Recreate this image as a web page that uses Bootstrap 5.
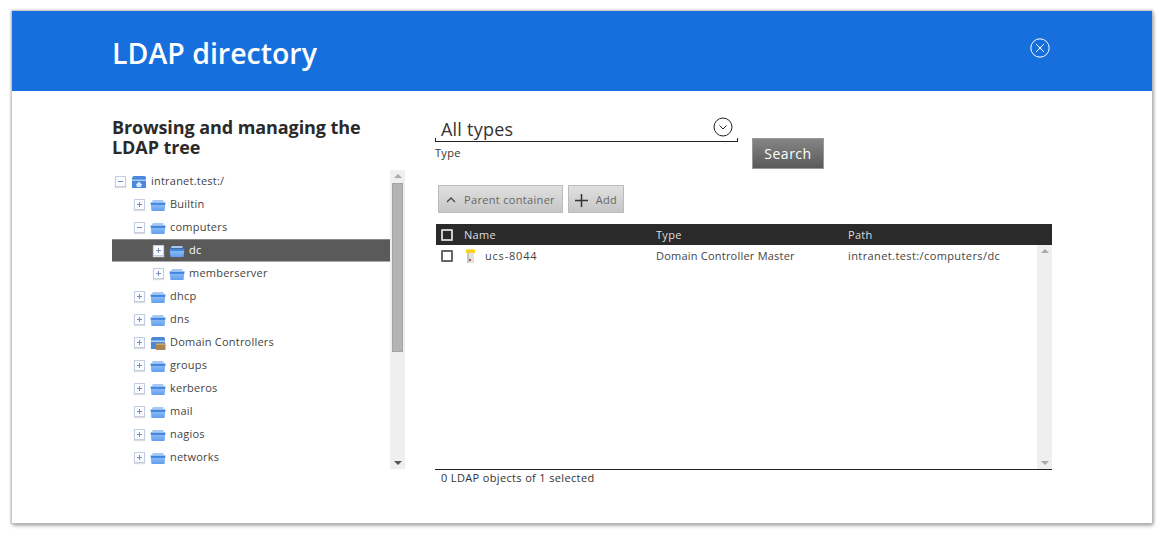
<!DOCTYPE html>
<html lang="en">
<head>
    <meta charset="UTF-8">
    <meta name="viewport" content="width=device-width, initial-scale=1.0">
    <title>LDAP directory</title>
    <link href="https://cdn.jsdelivr.net/npm/bootstrap@5.3.0/dist/css/bootstrap.min.css" rel="stylesheet">
    <style>
        html, body { height: 100%; }
        body { background: #fff; font-family: "Open Sans", "Noto Sans", sans-serif; color: #333; padding: 11px 0 0 12px; }
        .dlg { width: 1140px; height: 512px; box-shadow: 0 0 2px 1px #bbb, 1px 2px 4px #888; background: #fff; }
        .dlg-head { height: 80px; background: #166fdd; padding: 0 102px 0 100px; }
        .dlg-title { font-size: 28.5px; line-height: 34px; font-weight: 600; color: #fff; margin: 0; padding-top: 25px; }
        .dlg-body { padding: 25px 100px 0 100px; gap: 30px; }
        .tree-col { width: 293px; }
        .tree-title { font-size: 18px; line-height: 20px; font-weight: 700; color: #2a2a2a; margin: 1px 0 13px; letter-spacing: -.08px; }
        .tree-wrap { height: 299px; }
        .tree-rows { width: 278px; }
        .tree-row { height: 23px; font-size: 11px; letter-spacing: .22px; color: #444; gap: 5px; padding-left: 3px; }
        .tree-row.lvl1 { padding-left: 22px; }
        .tree-row.lvl2 { padding-left: 41px; }
        .tree-row.sel { background: #5a5a5a; color: #fff; border-top: 1px solid #888; border-bottom: 1px solid #aaa; }
        .exp { width: 11px; height: 11px; flex: none; border: 1px solid #c3cee4; background: #fbfcff; box-shadow: 0 1px 1px #ddd; position: relative; }
        .exp::before { content: ""; position: absolute; left: 2px; top: 4px; width: 5px; height: 1px; background: #7a8db3; }
        .exp.plus::after { content: ""; position: absolute; left: 4px; top: 2px; width: 1px; height: 5px; background: #7a8db3; }
        .fold { width: 16px; height: 16px; flex: none; margin-right: -1px; }
        .vbar { width: 15px; background: #efefef; flex: none; position: relative; }
        .vbar-thumb { position: absolute; left: 2px; top: 13px; width: 11px; height: 169px; background: #b4b4b4; border: 1px solid #a4a4a4; }
        .arr-up, .arr-dn { position: absolute; left: 4px; width: 0; height: 0; border-left: 4px solid transparent; border-right: 4px solid transparent; }
        .arr-up { top: 4px; border-bottom: 4px solid #aaa; }
        .arr-dn { bottom: 4px; border-top: 4px solid #555; }
        .grid-body .arr-dn { border-top-color: #aaa; }
        .list-col { width: 617px; }
        .type-field { width: 303px; }
        .type-box { height: 26px; border-bottom: 1px solid #222; position: relative; padding-left: 6px; font-size: 18px; line-height: 26px; color: #333; letter-spacing: .22px; }
        .type-box::before, .type-box::after { content: ""; position: absolute; bottom: 0; width: 1px; height: 3px; background: #222; }
        .type-box::before { left: 0; }
        .type-box::after { right: 0; }
        .type-icon { position: absolute; right: 5px; top: 1px; }
        .type-label { font-size: 11px; line-height: 14px; margin-top: 4px; letter-spacing: .3px; color: #333; }
        .btn-search { width: 72px; height: 31px; margin: 22px 0 0 14px; padding: 0; font-size: 14px; letter-spacing: .5px; color: #fff; border: 1px solid #999; border-radius: 0; background: linear-gradient(#858585, #5a5a5a); }
        .btn-search:hover { color: #fff; }
        .bar-btns { margin: 16px 0 11px 3px; gap: 5px; }
        .btn-soft { height: 28px; padding: 2px 0 0; border: 1px solid #bbb; border-radius: 0; background: linear-gradient(#e0e0e0, #c6c6c6); color: #666; font-size: 11px; letter-spacing: .32px; gap: 8px; }
        .btn-parent { width: 125px; }
        .btn-add { width: 56px; }
        .grid-head { height: 21px; margin-left: 1px; padding-top: 1px; background: #2a2a2a; color: #ddd; font-size: 11px; letter-spacing: .3px; }
        .grid-row { height: 21px; padding-top: 1px; font-size: 11px; letter-spacing: .22px; color: #444; }
        .c-check { width: 28px; padding-left: 5px; flex: none; }
        .c-name { width: 192px; flex: none; }
        .c-type { width: 192px; flex: none; }
        .c-host { letter-spacing: .8px; }
        .c-path { letter-spacing: .4px; }
        .chk { display: block; width: 12px; height: 12px; border: 2px solid #666; border-radius: 1px; background: #fff; }
        .grid-head .chk { border-color: #ccc; background: #2a2a2a; }
        .grid-body { height: 224px; margin-left: 1px; }
        .grid-list { width: 601px; }
        .grid-foot { border-top: 1px solid #222; font-size: 11px; line-height: 16px; padding: 0 0 0 6px; letter-spacing: .35px; color: #333; }
        .close-x { margin-top: 27px; }
    </style>
</head>
<body>

    <svg width="0" height="0" class="d-block">
        <defs>
            <linearGradient id="fb" x1="0" y1="0" x2="0" y2="1">
                <stop offset="0" stop-color="#3a7ed8"/>
                <stop offset="0.3" stop-color="#4a8fe8"/>
                <stop offset="0.35" stop-color="#86b7f3"/>
                <stop offset="1" stop-color="#629ff0"/>
            </linearGradient>
            <symbol id="folder" viewBox="0 0 16 16">
                <path d="M2 4.500 3 3h10.500v2H2z" fill="#a5c8f5"/>
                <path d="M.5 5.500h15L14.500 14h-13z" fill="url(#fb)"/>
            </symbol>
        </defs>
    </svg>

    <div class="dlg">
        <div class="dlg-head d-flex justify-content-between">
            <h1 class="dlg-title">LDAP directory</h1>
            <svg class="close-x" width="20" height="20" viewBox="0 0 20 20" fill="none" stroke="#fff">
                <circle cx="10" cy="10" r="9.200"/>
                <path d="M6 6l8 8M14 6l-8 8"/>
            </svg>
        </div>
        <div class="dlg-body d-flex">
            <div class="tree-col">
                <h2 class="tree-title">Browsing and managing the LDAP tree</h2>
                <div class="tree-wrap d-flex">
                    <div class="tree-rows">
                        <div class="tree-row d-flex align-items-center"><span class="exp"></span>
                            <svg class="fold" viewBox="0 0 16 16"><path d="M1 3.500 2.500 2H14l1 1.500V14H1z" fill="#4a88dc"/><path d="M1 5.500h14V7H1z" fill="#a5c8f5"/><path d="M8 7.500 11.500 11H10.300v2H5.700v-2H4.500z" fill="#d8e8fb"/></svg>intranet.test:/</div>
                        <div class="tree-row lvl1 d-flex align-items-center"><span class="exp plus"></span><svg class="fold"><use href="#folder"/></svg>Builtin</div>
                        <div class="tree-row lvl1 d-flex align-items-center"><span class="exp"></span><svg class="fold"><use href="#folder"/></svg>computers</div>
                        <div class="tree-row lvl2 sel d-flex align-items-center"><span class="exp plus"></span><svg class="fold"><use href="#folder"/></svg>dc</div>
                        <div class="tree-row lvl2 d-flex align-items-center"><span class="exp plus"></span><svg class="fold"><use href="#folder"/></svg>memberserver</div>
                        <div class="tree-row lvl1 d-flex align-items-center"><span class="exp plus"></span><svg class="fold"><use href="#folder"/></svg>dhcp</div>
                        <div class="tree-row lvl1 d-flex align-items-center"><span class="exp plus"></span><svg class="fold"><use href="#folder"/></svg>dns</div>
                        <div class="tree-row lvl1 d-flex align-items-center"><span class="exp plus"></span>
                            <svg class="fold" viewBox="0 0 16 16"><path d="M1 3.500 2.500 2H14l1 1.500V14H1z" fill="#4a88dc"/><path d="M1 5.500h14V7H1z" fill="#b5d2f6"/><path d="M6 8.500h9.500V15H6z" fill="#a9854f"/><path d="M6 8.500h9.500V10H6z" fill="#c9a76f"/></svg>Domain Controllers</div>
                        <div class="tree-row lvl1 d-flex align-items-center"><span class="exp plus"></span><svg class="fold"><use href="#folder"/></svg>groups</div>
                        <div class="tree-row lvl1 d-flex align-items-center"><span class="exp plus"></span><svg class="fold"><use href="#folder"/></svg>kerberos</div>
                        <div class="tree-row lvl1 d-flex align-items-center"><span class="exp plus"></span><svg class="fold"><use href="#folder"/></svg>mail</div>
                        <div class="tree-row lvl1 d-flex align-items-center"><span class="exp plus"></span><svg class="fold"><use href="#folder"/></svg>nagios</div>
                        <div class="tree-row lvl1 d-flex align-items-center"><span class="exp plus"></span><svg class="fold"><use href="#folder"/></svg>networks</div>
                    </div>
                    <div class="vbar"><i class="arr-up"></i><div class="vbar-thumb"></div><i class="arr-dn"></i></div>
                </div>
            </div>
            <div class="list-col">
                <div class="d-flex">
                    <div class="type-field">
                        <div class="type-box">All types
                            <svg class="type-icon" width="20" height="20" viewBox="0 0 20 20" fill="none" stroke="#222">
                                <circle cx="10" cy="10" r="9"/>
                                <path d="M6.500 8.500 10 12l3.500-3.500"/>
                            </svg>
                        </div>
                        <div class="type-label">Type</div>
                    </div>
                    <button type="button" class="btn btn-search">Search</button>
                </div>
                <div class="bar-btns d-flex">
                    <button type="button" class="btn btn-soft btn-parent d-flex align-items-center justify-content-center">
                        <svg width="10" height="6" viewBox="0 0 10 6" fill="none" stroke="#444" stroke-width="1.300"><path d="M1 5l4-4 4 4"/></svg>Parent container</button>
                    <button type="button" class="btn btn-soft btn-add d-flex align-items-center justify-content-center">
                        <svg width="13" height="13" viewBox="0 0 13 13" stroke="#333" stroke-width="1.500"><path d="M6.500 0v13M0 6.500h13"/></svg>Add</button>
                </div>
                <div class="grid-head d-flex align-items-center">
                    <div class="c-check"><span class="chk"></span></div>
                    <div class="c-name">Name</div>
                    <div class="c-type">Type</div>
                    <div>Path</div>
                </div>
                <div class="grid-body d-flex">
                    <div class="grid-list flex-grow-1">
                        <div class="grid-row d-flex align-items-center">
                            <div class="c-check"><span class="chk"></span></div>
                            <div class="c-name d-flex align-items-center gap-2">
                                <svg width="13" height="16" viewBox="0 0 13 16"><path d="M2 1l1.500 1L5 .5 6.500 2 8 .5 9.500 2 11 1v4H2z" fill="#f4d21f"/><path d="M3 5h7v10H3z" fill="#e4e2dc"/><path d="M3 5h2v10H3z" fill="#c9c7c0"/><path d="M5 11h2v2H5z" fill="#c94a4a"/></svg>
                                <span class="c-host">ucs-8044</span>
                            </div>
                            <div class="c-type">Domain Controller Master</div>
                            <div class="c-path">intranet.test:/computers/dc</div>
                        </div>
                    </div>
                    <div class="vbar"><i class="arr-up"></i><i class="arr-dn"></i></div>
                </div>
                <div class="grid-foot">0 LDAP objects of 1 selected</div>
            </div>
        </div>
    </div>

</body>
</html>
